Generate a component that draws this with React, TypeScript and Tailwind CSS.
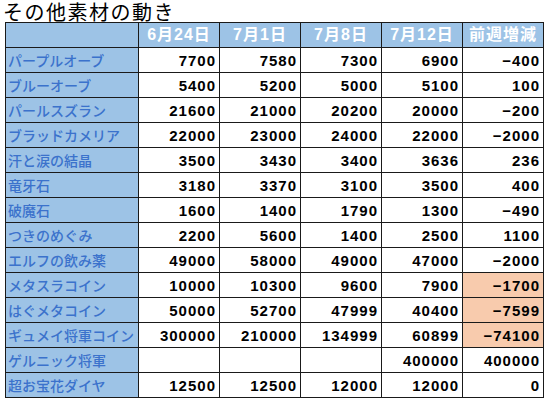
import React from "react";

type Row = { name: string; v: string[]; hl?: boolean };

const rows: Row[] = [
  { name: "パープルオーブ", v: ["7700", "7580", "7300", "6900", "−400"] },
  { name: "ブルーオーブ", v: ["5400", "5200", "5000", "5100", "100"] },
  { name: "パールスズラン", v: ["21600", "21000", "20200", "20000", "−200"] },
  { name: "ブラッドカメリア", v: ["22000", "23000", "24000", "22000", "−2000"] },
  { name: "汗と涙の結晶", v: ["3500", "3430", "3400", "3636", "236"] },
  { name: "竜牙石", v: ["3180", "3370", "3100", "3500", "400"] },
  { name: "破魔石", v: ["1600", "1400", "1790", "1300", "−490"] },
  { name: "つきのめぐみ", v: ["2200", "5600", "1400", "2500", "1100"] },
  { name: "エルフの飲み薬", v: ["49000", "58000", "49000", "47000", "−2000"] },
  { name: "メタスラコイン", v: ["10000", "10300", "9600", "7900", "−1700"], hl: true },
  { name: "はぐメタコイン", v: ["50000", "52700", "47999", "40400", "−7599"], hl: true },
  { name: "ギュメイ将軍コイン", v: ["300000", "210000", "134999", "60899", "−74100"], hl: true },
  { name: "ゲルニック将軍", v: ["", "", "", "400000", "400000"] },
  { name: "超お宝花ダイヤ", v: ["12500", "12500", "12000", "12000", "0"] },
];

const headers = ["6月24日", "7月1日", "7月8日", "7月12日", "前週増減"];

const font = { fontFamily: '"Liberation Sans", "Noto Sans CJK JP", sans-serif' };
const jp = { fontFamily: '"Noto Sans CJK JP", sans-serif' };

export default function App() {
  return (
    <div className="w-[553px] h-[403px] bg-white overflow-hidden" style={font}>
      <div className="h-[22px] pt-[2px] pl-[3px]">
        <div className="text-[20px] leading-[20px] text-black tracking-[1.5px] whitespace-nowrap" style={jp}>
          その他素材の動き
        </div>
      </div>
      <div className="ml-[5px] w-[539px] grid grid-cols-[132px_80px_80px_80px_80px_80px] auto-rows-[24px] gap-px p-px bg-[#1a1a1a]">
        <div className="bg-[#9dc3e6]" />
        {headers.map((h) => (
          <div
            key={h}
            className="bg-[#9dc3e6] text-white text-[16px] font-bold tracking-[1px] flex items-center justify-center leading-none whitespace-nowrap"
          >
            {h}
          </div>
        ))}
        {rows.map((r) => (
          <React.Fragment key={r.name}>
            <div
              className="bg-[#9dc3e6] text-[#3b72cc] text-[14px] font-medium flex items-center pl-[2px] leading-none whitespace-nowrap"
              style={jp}
            >
              {r.name}
            </div>
            {r.v.map((x, i) => (
              <div
                key={i}
                className={`${r.hl && i === 4 ? "bg-[#f8cbad]" : "bg-white"} text-black text-[15px] font-bold tracking-[1px] flex items-center justify-end pr-[3px] leading-none`}
              >
                {x}
              </div>
            ))}
          </React.Fragment>
        ))}
      </div>
    </div>
  );
}
